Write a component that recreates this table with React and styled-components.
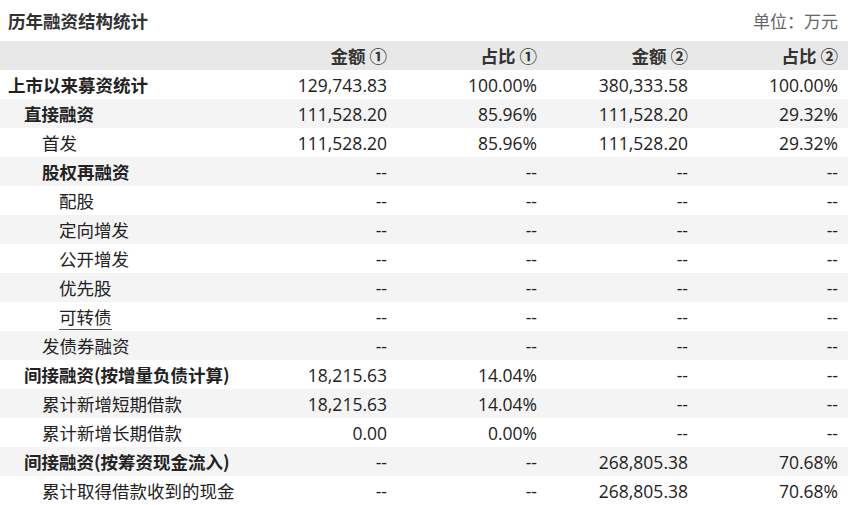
import React from "react";
import styled, { createGlobalStyle } from "styled-components";

const GlobalStyle = createGlobalStyle`
  body {
    margin: 0;
    background: #fff;
    font-family: "Microsoft YaHei", "Noto Sans CJK SC", sans-serif;
  }
`;

const rows = [
  { label: "上市以来募资统计", level: 0, bold: true, v: ["129,743.83", "100.00%", "380,333.58", "100.00%"] },
  { label: "直接融资", level: 1, bold: true, v: ["111,528.20", "85.96%", "111,528.20", "29.32%"] },
  { label: "首发", level: 2, v: ["111,528.20", "85.96%", "111,528.20", "29.32%"] },
  { label: "股权再融资", level: 2, bold: true, v: ["--", "--", "--", "--"] },
  { label: "配股", level: 3, v: ["--", "--", "--", "--"] },
  { label: "定向增发", level: 3, v: ["--", "--", "--", "--"] },
  { label: "公开增发", level: 3, v: ["--", "--", "--", "--"] },
  { label: "优先股", level: 3, v: ["--", "--", "--", "--"] },
  { label: "可转债", level: 3, link: true, v: ["--", "--", "--", "--"] },
  { label: "发债券融资", level: 2, v: ["--", "--", "--", "--"] },
  { label: "间接融资(按增量负债计算)", level: 1, bold: true, v: ["18,215.63", "14.04%", "--", "--"] },
  { label: "累计新增短期借款", level: 2, v: ["18,215.63", "14.04%", "--", "--"] },
  { label: "累计新增长期借款", level: 2, v: ["0.00", "0.00%", "--", "--"] },
  { label: "间接融资(按筹资现金流入)", level: 1, bold: true, v: ["--", "--", "268,805.38", "70.68%"] },
  { label: "累计取得借款收到的现金", level: 2, v: ["--", "--", "268,805.38", "70.68%"] },
];

const indents = [8, 24, 42, 59];

const App = () => {
  return (
    <Wrapper>
      <GlobalStyle />
      <TitleBar>
        <Title>历年融资结构统计</Title>
        <Unit>单位：万元</Unit>
      </TitleBar>
      <Table>
        <HeadRow>
          <LabelCell />
          <HeadCell>金额 ①</HeadCell>
          <HeadCell>占比 ①</HeadCell>
          <HeadCell>金额 ②</HeadCell>
          <HeadCell>占比 ②</HeadCell>
        </HeadRow>
        {rows.map((r, i) => (
          <Row key={i} $striped={i % 2 === 1}>
            <LabelCell $indent={indents[r.level]} $bold={r.bold}>
              {r.link ? <LinkText>{r.label}</LinkText> : r.label}
            </LabelCell>
            {r.v.map((val, j) => (
              <Cell key={j}>{val}</Cell>
            ))}
          </Row>
        ))}
      </Table>
    </Wrapper>
  );
};

const Wrapper = styled.div`
  width: 848px;
  color: #222;
`;

const TitleBar = styled.div`
  display: flex;
  justify-content: space-between;
  align-items: center;
  height: 41px;
  padding: 0 10px 0 8px;
`;

const Title = styled.div`
  font-size: 17.5px;
  font-weight: bold;
  color: #333;
`;

const Unit = styled.div`
  font-size: 17px;
  color: #666;
`;

const Table = styled.div`
  display: flex;
  flex-direction: column;
`;

const Row = styled.div`
  display: grid;
  grid-template-columns: 247px 150px 150px 151px 150px;
  height: 29px;
  align-items: center;
  font-size: 17.5px;
  background: ${({ $striped }) => ($striped ? "#f4f4f4" : "#fff")};
`;

const HeadRow = styled(Row)`
  background: #e8e8e8;
`;

const LabelCell = styled.div`
  padding-left: ${({ $indent }) => $indent || 8}px;
  font-weight: ${({ $bold }) => ($bold ? "bold" : "normal")};
  white-space: nowrap;
`;

const Cell = styled.div`
  text-align: right;
  padding-right: 10px;
  white-space: nowrap;
  font-family: "Open Sans", "Noto Sans CJK SC", sans-serif;
`;

const HeadCell = styled(Cell)`
  font-weight: bold;
  color: #333;
  font-family: "Noto Sans CJK SC", sans-serif;
`;

const LinkText = styled.span`
  border-bottom: 1px solid #555;
`;

export default App;
